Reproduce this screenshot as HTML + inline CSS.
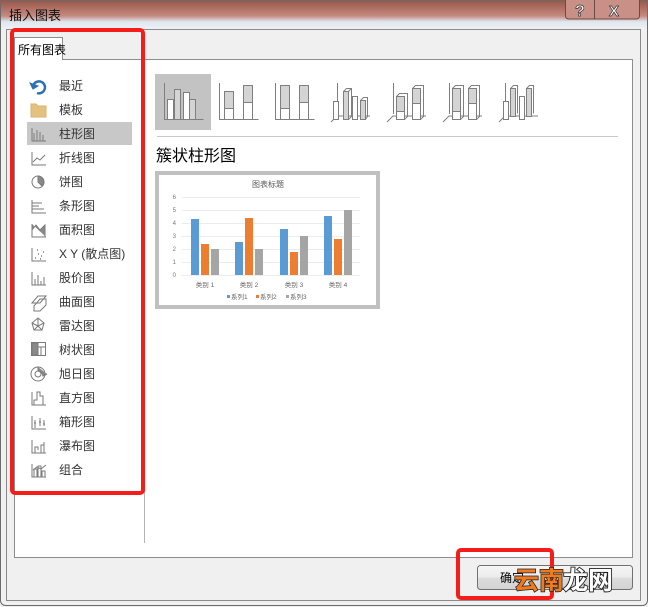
<!DOCTYPE html>
<html><head><meta charset="utf-8"><style>
html,body{margin:0;padding:0;width:648px;height:607px;overflow:hidden;background:#f0f0f0}
svg{display:block}
text{font-family:"Liberation Sans","Noto Sans CJK SC",sans-serif}
</style></head><body>
<svg width="648" height="607" viewBox="0 0 648 607" xmlns="http://www.w3.org/2000/svg">
<defs>
<linearGradient id="tb" x1="0" y1="0" x2="0" y2="1">
<stop offset="0" stop-color="#9a5448"/><stop offset="0.55" stop-color="#c48a80"/><stop offset="0.75" stop-color="#dfe6ee"/><stop offset="1" stop-color="#eef1f4"/>
</linearGradient>
<linearGradient id="btn" x1="0" y1="0" x2="0" y2="1">
<stop offset="0" stop-color="#f6f6f6"/><stop offset="0.5" stop-color="#ebebeb"/><stop offset="0.5" stop-color="#dddddd"/><stop offset="1" stop-color="#d2d2d2"/>
</linearGradient>
</defs>
<rect x="0" y="0" width="648" height="607" fill="#f0f0f0"/>
<rect x="0" y="0" width="648" height="29" fill="url(#tb)"/>
<rect x="0.5" y="0.5" width="647" height="605" fill="none" stroke="#6b6b6b" rx="5"/>
<line x1="6" y1="29.5" x2="641" y2="29.5" stroke="#8a8a8a"/>
<line x1="6.5" y1="29" x2="6.5" y2="600" stroke="#8a8a8a"/>
<line x1="640.5" y1="29" x2="640.5" y2="600" stroke="#8a8a8a"/>
<line x1="6" y1="600.5" x2="641" y2="600.5" stroke="#8a8a8a"/>
<text x="9" y="20" font-size="13" fill="#111">插入图表</text>
<rect x="565.5" y="-4" width="74" height="23" rx="3" fill="#c99088" stroke="#6e4a45"/>
<line x1="594.5" y1="0" x2="594.5" y2="19" stroke="#6e4a45"/>
<text x="575" y="16" font-size="16" font-weight="bold" fill="#fff" stroke="#333" stroke-width="0.7">?</text>
<text x="609" y="16" font-size="15" font-weight="bold" fill="#fff" stroke="#333" stroke-width="0.7">X</text>
<rect x="14.5" y="59.5" width="618" height="498" fill="#fff" stroke="#8d8d8d"/>
<rect x="14.5" y="37.5" width="48" height="22" fill="#fff" stroke="#8d8d8d"/>
<rect x="15" y="58" width="47" height="3" fill="#fff"/>
<text x="18" y="54" font-size="12" fill="#000">所有图表</text>
<line x1="144.5" y1="60" x2="144.5" y2="543" stroke="#b4b4b4"/>
<rect x="27" y="122" width="105" height="23" fill="#c8c8c8"/>
<g font-size="12" fill="#333">
<text x="59" y="90">最近</text><text x="59" y="114">模板</text><text x="59" y="138">柱形图</text><text x="59" y="162">折线图</text>
<text x="59" y="186">饼图</text><text x="59" y="210">条形图</text><text x="59" y="234">面积图</text><text x="59" y="258">X Y (散点图)</text>
<text x="59" y="282">股价图</text><text x="59" y="306">曲面图</text><text x="59" y="330">雷达图</text><text x="59" y="354">树状图</text>
<text x="59" y="378">旭日图</text><text x="59" y="402">直方图</text><text x="59" y="426">箱形图</text><text x="59" y="450">瀑布图</text><text x="59" y="474">组合</text>
</g>
<g fill="none" stroke="#7a7a7a" stroke-width="1">
<path d="M33 88 a6 6 0 1 1 4 5" stroke="#2e6fb7" stroke-width="2.5"/><path d="M30 83 l3 6 l5 -3z" fill="#2e6fb7" stroke="#2e6fb7"/>
<path d="M31 104 h5 l2 2 h8 v11 h-15z" fill="#e4c081" stroke="#d9b46e"/>
<path d="M32 128 v13 h14 M34 141 v-8 M37 141 v-11 M40 141 v-9 M43 141 v-6"/>
<path d="M32 152 v13 h14 M33 162 l4-4 3 2 5-5"/>
<circle cx="38" cy="182" r="6"/><path d="M38 182 v-6 a6 6 0 0 1 4 10z" fill="#8a8a8a"/>
<path d="M32 200 v13 h14 M32 203 h10 M32 206 h7 M32 209 h12"/>
<path d="M32 224 v13 h14 M32 230 l4 -5 4 5 5 -5 v12 h-13z" fill="#8a8a8a"/>
<path d="M32 248 v13 h14" /><path d="M35 258 h1 M38 254 h1 M41 256 h1 M37 250 h1 M43 252 h1 M40 259 h1" stroke-width="1.5"/>
<path d="M32 272 v13 h14 M35 285 v-6 M38 285 v-10 M41 285 v-4 M44 285 v-8"/>
<path d="M32 303 l6-7 h8 l-6 7z M34 306 l6-7 h6 v6 l-6 6 h-6z"/>
<path d="M38 318 l6 5 -2 7 h-8 l-2 -7z M38 318 v8 l6 -3 M38 326 l-4 4 M38 326 l4 4 M38 326 l-6-3"/>
<rect x="31.5" y="342.5" width="14" height="13"/><rect x="32" y="343" width="6" height="12" fill="#8a8a8a"/><path d="M38 347 h8 M41 347 v8"/>
<circle cx="38" cy="374" r="7"/><circle cx="38" cy="374" r="3"/><path d="M38 367 v4 a6 6 0 0 1 5 5 l4 -2" fill="#8a8a8a"/>
<path d="M32 392 v13 h14 M34 405 v-5 h3 v-8 h3 v4 h3 v9"/>
<path d="M32 416 v13 h14 M35 420 v8 M40 418 v8 M44 420 v6 M34 423 h2 M39 422 h2 M43 424 h2"/>
<path d="M32 440 v13 h14 M35 453 v-6 h3 v3 M41 453 v-8 h3 v-3 v11"/>
<path d="M32 464 v13 h14 M34 477 v-8 h3 v8 M38 477 v-11 h3 v11 M42 477 v-6 h3 v6 M33 470 l4 -3 4 2 5 -4"/>
</g>
<rect x="12" y="30" width="131" height="463" rx="3" fill="none" stroke="#f51d1a" stroke-width="4"/>
<rect x="155" y="74" width="56" height="56" fill="#c3c3c3"/>
<g stroke="#7f7f7f" fill="none">
<path d="M164.5 83 v36.5 h39"/>
<rect x="167.5" y="99.5" width="6" height="20" fill="#fff"/><rect x="174.5" y="89.5" width="6" height="30" fill="#d4d4d4"/><rect x="183.5" y="92.5" width="6" height="27" fill="#fff"/><rect x="189.5" y="99.5" width="6" height="20" fill="#d4d4d4"/>
<path d="M219.5 83 v36.5 h39"/>
<rect x="224.5" y="91.5" width="9" height="17" fill="#d4d4d4"/><rect x="224.5" y="108.5" width="9" height="11" fill="#fff"/>
<rect x="243.5" y="85.5" width="9" height="17" fill="#d4d4d4"/><rect x="243.5" y="102.5" width="9" height="17" fill="#fff"/>
<path d="M275.5 83 v36.5 h39"/>
<rect x="280.5" y="85.5" width="9" height="23" fill="#d4d4d4"/><rect x="280.5" y="108.5" width="9" height="11" fill="#fff"/>
<rect x="299.5" y="85.5" width="9" height="17" fill="#d4d4d4"/><rect x="299.5" y="102.5" width="9" height="17" fill="#fff"/>
<path d="M337.5 83 v31 M331 122 l6 -6 h33"/>
<rect x="333.5" y="101.5" width="5" height="18" fill="#fff"/><rect x="343.5" y="91.5" width="5" height="28" fill="#d4d4d4"/><path d="M343.5 91.5 l3-3 h5 v28 l-3 3 M348.5 91.5 l3-3"/>
<rect x="352.5" y="96.5" width="5" height="23" fill="#fff"/><rect x="360.5" y="100.5" width="5" height="19" fill="#d4d4d4"/><path d="M360.5 100.5 l3-3 h4 v19 l-2 3"/>
<path d="M393.5 83 v31 M387 122 l6 -6 h33"/>
<rect x="396.5" y="96.5" width="8" height="15" fill="#d4d4d4"/><rect x="396.5" y="111.5" width="8" height="8" fill="#fff"/><path d="M396.5 96.5 l3-3 h8 v23 l-3 3"/>
<rect x="412.5" y="88.5" width="8" height="15" fill="#d4d4d4"/><rect x="412.5" y="103.5" width="8" height="16" fill="#fff"/><path d="M412.5 88.5 l3-3 h8 v31 l-3 3"/>
<path d="M449.5 83 v31 M443 122 l6 -6 h33"/>
<rect x="452.5" y="88.5" width="8" height="23" fill="#d4d4d4"/><rect x="452.5" y="111.5" width="8" height="8" fill="#fff"/><path d="M452.5 88.5 l3-3 h8 v31 l-3 3"/>
<rect x="468.5" y="88.5" width="8" height="15" fill="#d4d4d4"/><rect x="468.5" y="103.5" width="8" height="16" fill="#fff"/><path d="M468.5 88.5 l3-3 h8 v31 l-3 3"/>
<path d="M505.5 83 v31 M499 122 l6 -6 h33"/>
<rect x="503.5" y="101.5" width="5" height="18" fill="#fff"/><rect x="510.5" y="88.5" width="5" height="28" fill="#d4d4d4"/><path d="M510.5 88.5 l3-3 h4 v28"/>
<rect x="519.5" y="96.5" width="5" height="23" fill="#fff"/><rect x="526.5" y="88.5" width="5" height="28" fill="#d4d4d4"/><path d="M526.5 88.5 l3-3 h4 v28"/>
</g>
<line x1="157" y1="136.5" x2="618" y2="136.5" stroke="#c8c8c8"/>
<text x="156" y="161" font-size="16" fill="#000">簇状柱形图</text>
<rect x="157" y="173" width="221" height="134" fill="#fff" stroke="#c0c0c0" stroke-width="4"/>
<text x="268" y="187" font-size="8" fill="#595959" text-anchor="middle">图表标题</text>
<g stroke="#ececec">
<line x1="182" y1="197.5" x2="360" y2="197.5"/><line x1="182" y1="210.5" x2="360" y2="210.5"/><line x1="182" y1="223.5" x2="360" y2="223.5"/><line x1="182" y1="236.5" x2="360" y2="236.5"/><line x1="182" y1="249.5" x2="360" y2="249.5"/><line x1="182" y1="262.5" x2="360" y2="262.5"/><line x1="182" y1="275.5" x2="360" y2="275.5"/>
</g>
<g font-size="6" fill="#777" text-anchor="end">
<text x="176" y="199">6</text><text x="176" y="212">5</text><text x="176" y="225">4</text><text x="176" y="238">3</text><text x="176" y="251">2</text><text x="176" y="264">1</text><text x="176" y="277">0</text>
</g>
<g>
<rect x="191" y="219" width="8" height="56" fill="#5b9bd5"/><rect x="201" y="244" width="8" height="31" fill="#ed7d31"/><rect x="211" y="249" width="8" height="26" fill="#a5a5a5"/>
<rect x="235" y="242" width="8" height="33" fill="#5b9bd5"/><rect x="245" y="218" width="8" height="57" fill="#ed7d31"/><rect x="255" y="249" width="8" height="26" fill="#a5a5a5"/>
<rect x="280" y="229" width="8" height="46" fill="#5b9bd5"/><rect x="290" y="252" width="8" height="23" fill="#ed7d31"/><rect x="300" y="236" width="8" height="39" fill="#a5a5a5"/>
<rect x="324" y="216" width="8" height="59" fill="#5b9bd5"/><rect x="334" y="239" width="8" height="36" fill="#ed7d31"/><rect x="344" y="210" width="8" height="65" fill="#a5a5a5"/>
</g>
<g font-size="6.5" fill="#666" text-anchor="middle">
<text x="205" y="287">类别 1</text><text x="249" y="287">类别 2</text><text x="294" y="287">类别 3</text><text x="338" y="287">类别 4</text>
</g>
<rect x="227" y="295" width="3" height="3" fill="#5b9bd5"/><rect x="256" y="295" width="3" height="3" fill="#ed7d31"/><rect x="286" y="295" width="3" height="3" fill="#a5a5a5"/>
<g font-size="6.5" fill="#666"><text x="231" y="299">系列1</text><text x="260" y="299">系列2</text><text x="290" y="299">系列3</text></g>
<rect x="477.5" y="565.5" width="155" height="24" rx="3" fill="url(#btn)" stroke="#707070"/>
<text x="500" y="582" font-size="12" fill="#000">确定</text>
<rect x="458" y="550" width="94" height="48" rx="3" fill="none" stroke="#f51d1a" stroke-width="4"/>
<text x="514" y="589" font-size="25" font-weight="bold" fill="#f07a1e" stroke="#222" stroke-width="1.5" paint-order="stroke">云南</text>
<text x="563" y="589" font-size="25" font-weight="bold" fill="#fff" stroke="#222" stroke-width="1.8" paint-order="stroke">龙网</text>
</svg>
</body></html>
